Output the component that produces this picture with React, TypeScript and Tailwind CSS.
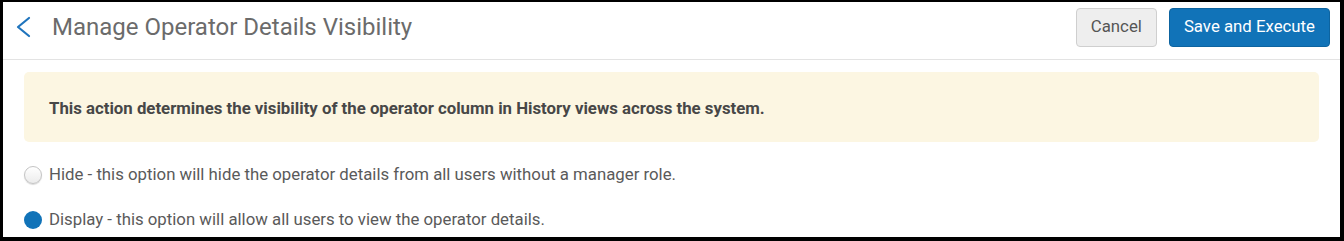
import React, { useState } from 'react';

const options = [
  { id: 'hide', label: 'Hide - this option will hide the operator details from all users without a manager role.' },
  { id: 'display', label: 'Display - this option will allow all users to view the operator details.' },
];

function Radio({ checked }: { checked: boolean }) {
  return checked ? (
    <span className="w-[18px] h-[18px] rounded-full bg-[#1173b8] shrink-0" />
  ) : (
    <span className="w-[18px] h-[18px] rounded-full border border-[#c4c4c4] bg-gradient-to-b from-white to-[#ececec] shadow-[0_1px_1px_rgba(0,0,0,0.15)] shrink-0" />
  );
}

export default function App() {
  const [value, setValue] = useState('display');

  return (
    <div className="w-[1344px] h-[241px] bg-white border-black border-l-[3px] border-t-2 border-r-4 border-b-4 overflow-hidden font-['Roboto',sans-serif]">
      <div className="h-[58px] flex items-center justify-between border-b border-[#e3e3e3] pl-[12px] pr-[10px]">
        <div className="flex items-center gap-[21px] mt-[-7px]">
          <svg width="16" height="22" viewBox="0 0 16 22" className="text-[#1f74bd]">
            <path d="M14 2 L3 11 L14 20" fill="none" stroke="currentColor" strokeWidth="2.2" strokeLinecap="round" strokeLinejoin="round" />
          </svg>
          <h1 className="text-[24px] text-[#6b6b6b] leading-none">Manage Operator Details Visibility</h1>
        </div>
        <div className="flex items-center gap-[12px] mt-[-7px]">
          <button className="h-[39px] px-[14px] rounded-[4px] border border-[#cfcfcf] bg-[#eeeeee] text-[16.8px] text-[#555]">
            Cancel
          </button>
          <button className="h-[39px] px-[14px] rounded-[4px] border border-[#0d64a0] bg-[#1173b8] text-[16.8px] text-white">
            Save and Execute
          </button>
        </div>
      </div>
      <div className="px-[21px] pt-[12px]">
        <div className="h-[70px] rounded-[5px] bg-[#fcf6e2] flex items-center pl-[25px] pt-[4px]">
          <p className="text-[16.8px] font-bold text-[#474747]">
            This action determines the visibility of the operator column in History views across the system.
          </p>
        </div>
        <div className="flex flex-col gap-[27px] mt-[24px]">
          {options.map((o) => (
            <label key={o.id} className="flex items-center gap-[7px] cursor-pointer h-[18px]" onClick={() => setValue(o.id)}>
              <Radio checked={value === o.id} />
              <span className="text-[16.8px] text-[#5a5a5a]">{o.label}</span>
            </label>
          ))}
        </div>
      </div>
    </div>
  );
}
